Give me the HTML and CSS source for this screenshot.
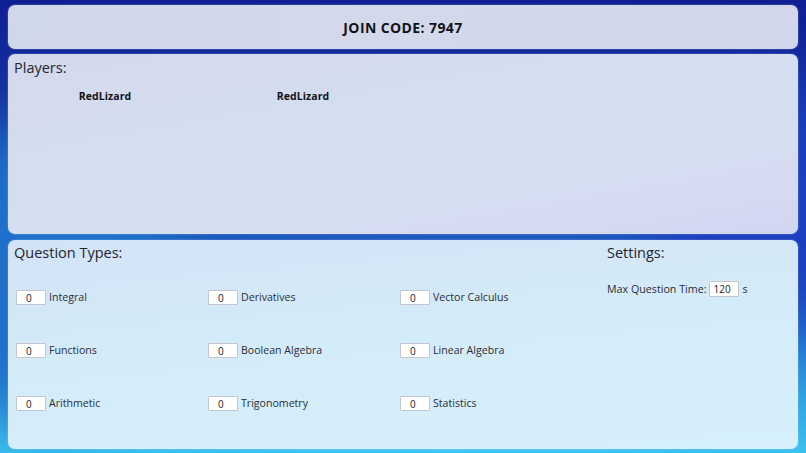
FILE: index.html
```html
<!DOCTYPE html>
<html>
<head>
<meta charset="utf-8">
<link rel="stylesheet" href="styles.css">
</head>
<body>
<div class="backdrop">
  <div class="bg-blob blob-a"></div>
  <div class="bg-blob blob-b"></div>
  <div class="bg-blob blob-c"></div>
</div>
<main class="page">
  <header class="panel code-panel">
    <h1 class="join-code">JOIN CODE: 7947</h1>
  </header>
  <section class="panel players-panel">
    <h2 class="panel-title">Players:</h2>
    <div class="players-grid">
      <div class="player">RedLizard</div>
      <div class="player">RedLizard</div>
    </div>
  </section>
  <section class="panel options-panel">
    <div class="question-types">
      <h2 class="panel-title">Question Types:</h2>
      <div class="types-grid">
        <label class="type-item"><input class="num-input" type="text" value="0"><span>Integral</span></label>
        <label class="type-item"><input class="num-input" type="text" value="0"><span>Derivatives</span></label>
        <label class="type-item"><input class="num-input" type="text" value="0"><span>Vector Calculus</span></label>
        <label class="type-item"><input class="num-input" type="text" value="0"><span>Functions</span></label>
        <label class="type-item"><input class="num-input" type="text" value="0"><span>Boolean Algebra</span></label>
        <label class="type-item"><input class="num-input" type="text" value="0"><span>Linear Algebra</span></label>
        <label class="type-item"><input class="num-input" type="text" value="0"><span>Arithmetic</span></label>
        <label class="type-item"><input class="num-input" type="text" value="0"><span>Trigonometry</span></label>
        <label class="type-item"><input class="num-input" type="text" value="0"><span>Statistics</span></label>
      </div>
    </div>
    <div class="settings">
      <h2 class="panel-title">Settings:</h2>
      <label class="setting-row"><span>Max Question Time:</span><input class="num-input time-input" type="text" value="120"><span>s</span></label>
    </div>
  </section>
</main>
</body>
</html>
```

FILE: styles.css
```css
* { box-sizing: border-box; }
html, body {
  margin: 0;
  height: 453px;
  overflow: hidden;
}
body {
  position: relative;
  font-family: "Open Sans", "DejaVu Sans", sans-serif;
  color: #1d1f2a;
  background: linear-gradient(180deg, #0f1f93 0%, #1638a6 30%, #1d5cc0 55%, #2a8fd9 80%, #3cc0ec 100%);
}
.backdrop {
  position: absolute;
  inset: 0;
  overflow: hidden;
}
.bg-blob {
  position: absolute;
  border-radius: 50%;
  filter: blur(30px);
}
.blob-a { left: -80px; top: 120px; width: 260px; height: 300px; background: #1f6fcb; }
.blob-b { right: -60px; top: 80px; width: 220px; height: 260px; background: #1d3fc0; }
.blob-c { left: 250px; top: 380px; width: 400px; height: 140px; background: #3fc4f0; }

.page {
  position: relative;
  height: 453px;
  padding: 5px 8px;
  display: flex;
  flex-direction: column;
  gap: 5px;
}
.panel {
  border-radius: 7px;
  box-shadow: 0 0 2px rgba(255,255,255,0.4);
}
.code-panel {
  height: 44px;
  flex: none;
  display: flex;
  align-items: center;
  justify-content: center;
  background: linear-gradient(100deg, #cfd8ea 0%, #d3d8ea 40%, #d2d6ea 100%);
}
.join-code {
  margin: 0;
  font-size: 14px;
  font-weight: 700;
  color: #111318;
  letter-spacing: 0.4px;
}
.players-panel {
  height: 180px;
  flex: none;
  padding: 4px 6px;
  background: linear-gradient(170deg, #d4d9ec 0%, #d3dff0 45%, #d6def2 70%, #d1d6f0 100%);
}
.panel-title {
  margin: 0;
  font-size: 14.5px;
  font-weight: 400;
  color: #22252e;
  line-height: 20px;
}
.players-grid {
  margin: 11px -6px 0 -8px;
  display: grid;
  grid-template-columns: repeat(4, 1fr);
}
.player {
  text-align: center;
  font-size: 10.5px;
  font-weight: 700;
  color: #111318;
  line-height: 14px;
  letter-spacing: 0.1px;
}
.options-panel {
  flex: 1;
  margin-top: 1px;
  display: grid;
  grid-template-columns: 593px 1fr;
  background: linear-gradient(175deg, #d3e3f6 0%, #d4ecf9 50%, #d6f0fb 100%);
}
.question-types {
  padding: 3px 6px 0 6px;
}
.types-grid {
  margin-top: 27px;
  padding-left: 2px;
  display: grid;
  grid-template-columns: repeat(3, 192px);
  grid-auto-rows: 53px;
}
.type-item {
  display: flex;
  align-items: flex-start;
  gap: 3px;
  font-size: 10.6px;
  color: #2a2d36;
  line-height: 15px;
}
.num-input {
  width: 30px;
  height: 15px;
  padding: 0 0 0 9px;
  border: 1px solid #c3c6cc;
  border-radius: 1px;
  background: #fff;
  font-family: "Open Sans", sans-serif;
  font-size: 10px;
  color: #222;
  outline: none;
}
.settings {
  padding: 3px 6px 0 6px;
}
.setting-row {
  margin-top: 18px;
  display: flex;
  align-items: center;
  gap: 3px;
  font-size: 10.7px;
  color: #2a2d36;
}
.time-input {
  width: 30px;
  height: 16px;
  padding-left: 3px;
}
```
